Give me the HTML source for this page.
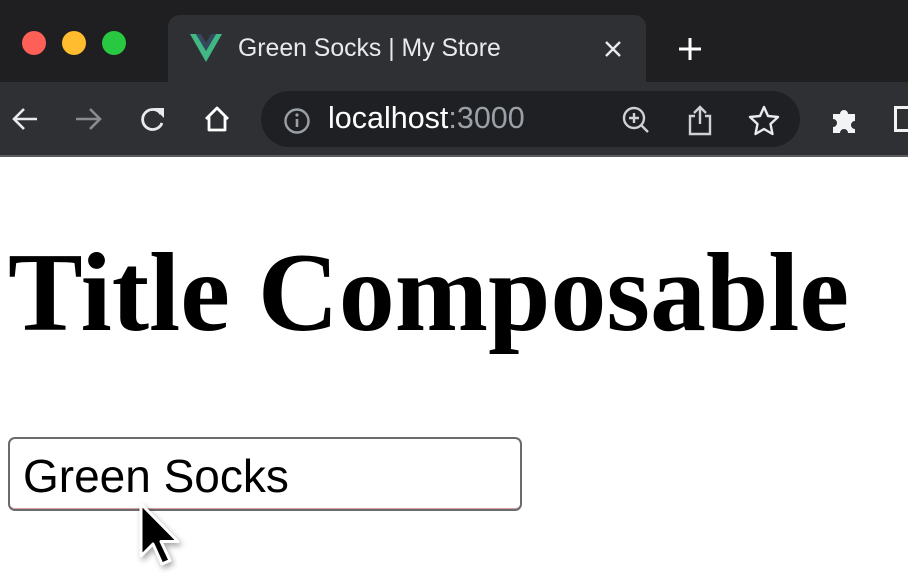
<!DOCTYPE html>
<html><head><meta charset="utf-8"><style>
*{margin:0;padding:0;box-sizing:border-box}
body{width:908px;height:588px;overflow:hidden;background:#fff;position:relative;font-family:"Liberation Sans",sans-serif}
.strip{position:absolute;left:0;top:0;width:908px;height:82px;background:#1f1f21}
.tab{position:absolute;left:168px;top:15px;width:478px;height:70px;background:#2f3034;border-radius:12px 12px 0 0}
.tb{position:absolute;left:0;top:82px;width:908px;height:73px;background:#2f3034}
.line{position:absolute;left:0;top:155px;width:908px;height:2px;background:#5a5b5e}
.dot{position:absolute;top:31px;width:24px;height:24px;border-radius:50%}
.pill{position:absolute;left:261px;top:91px;width:539px;height:56px;border-radius:28px;background:#1f2023}
svg{position:absolute}
.t{position:absolute;color:#e8eaed;font-size:24.8px;white-space:nowrap}
h1{position:absolute;left:8px;top:237px;font-family:"Liberation Serif",serif;font-weight:bold;font-size:112px;line-height:112px;white-space:nowrap;color:#000}
.inp{position:absolute;left:8px;top:437px;width:514px;height:74px;border:2px solid #6b6b6b;border-radius:7px;box-shadow:inset 0 -2px 0 -1px #d9a0a0}
.inp span{position:absolute;left:13px;top:10px;font-size:46px;color:#000}
</style></head><body>
<div class="strip"></div>
<div class="tab"></div>
<div class="tb"></div>
<div class="line"></div>
<div class="dot" style="left:22px;background:#fe5f57"></div>
<div class="dot" style="left:62px;background:#febc2e"></div>
<div class="dot" style="left:102px;background:#28c840"></div>
<svg style="left:190px;top:34px" width="32" height="28" viewBox="0 0 32 28"><path d="M0 0h6l10 17L26 0h6L16 28z" fill="#41b883"/><path d="M6 0h5l5 9 5-9h5L16 17z" fill="#34495e"/></svg>
<div class="t" style="left:238px;top:35px">Green Socks | My Store</div>
<svg style="left:604px;top:40px" width="18" height="18"><path d="M2 2L16 16M16 2L2 16" stroke="#e8eaed" stroke-width="2.4"/></svg>
<svg style="left:678px;top:37px" width="24" height="24"><path d="M12 1v22M1 12h22" stroke="#fff" stroke-width="3"/></svg>
<svg style="left:10px;top:106px" width="30" height="26"><path d="M27 13H4M14 3L4 13l10 10" stroke="#e8eaed" stroke-width="2.6" fill="none"/></svg>
<svg style="left:74px;top:106px" width="30" height="26"><path d="M2 13h23M16 3l10 10-10 10" stroke="#8a8b8e" stroke-width="2.6" fill="none"/></svg>
<svg style="left:138px;top:105px" width="30" height="28"><path d="M23 9A10 10 0 1 0 24 18" stroke="#e8eaed" stroke-width="2.8" fill="none"/><path d="M16 3h10v10z" fill="#e8eaed"/></svg>
<svg style="left:202px;top:105px" width="30" height="28"><path d="M4 14L15 3l11 11M7 11v14h16V11" stroke="#fff" stroke-width="2.8" fill="none" stroke-linejoin="round"/></svg>
<div class="pill"></div>
<svg style="left:283px;top:107px" width="28" height="28"><circle cx="14" cy="14" r="11.5" stroke="#9aa0a6" stroke-width="2.4" fill="none"/><path d="M14 12v8" stroke="#9aa0a6" stroke-width="2.6"/><circle cx="14" cy="8" r="1.6" fill="#9aa0a6"/></svg>
<div class="t" style="left:328px;top:101px;font-size:30.5px;color:#fff">localhost<span style="color:#9aa0a6">:3000</span></div>
<svg style="left:621px;top:105px" width="30" height="30"><circle cx="13" cy="13" r="10" stroke="#cfd1d4" stroke-width="2.4" fill="none"/><path d="M13 8v10M8 13h10M20 20l7 7" stroke="#cfd1d4" stroke-width="2.4"/></svg>
<svg style="left:686px;top:104px" width="28" height="32"><path d="M9 12H4v18h20V12h-5M14 3v17M8 9l6-6 6 6" stroke="#cfd1d4" stroke-width="2.4" fill="none"/></svg>
<svg style="left:748px;top:104px" width="32" height="32"><path d="M16 3l4 9 10 1-7.5 7 2 10L16 25l-8.5 5 2-10L2 13l10-1z" stroke="#e8eaed" stroke-width="2.4" fill="none" stroke-linejoin="round"/></svg>
<svg style="left:830px;top:105px" width="30" height="30"><path d="M3 9h7a4 4 0 1 1 8 0h7v7a4 4 0 1 0 0 8v4h-7a4 4 0 1 0-8 0H3v-6a4 4 0 1 0 0-8z" fill="#f1f3f4"/></svg>
<div style="position:absolute;left:894px;top:106px;width:20px;height:26px;border:3px solid #f1f3f4"></div>
<h1>Title Composable</h1>
<div class="inp"><span>Green Socks</span></div>
<svg style="left:134px;top:502px" width="56" height="76"><path d="M7 2v52l12-12 9 20 8-3.5-9-19h17z" fill="#000" stroke="#fff" stroke-width="3" stroke-linejoin="round" style="filter:drop-shadow(2px 3px 3px rgba(0,0,0,.35))"/></svg>
</body></html>
